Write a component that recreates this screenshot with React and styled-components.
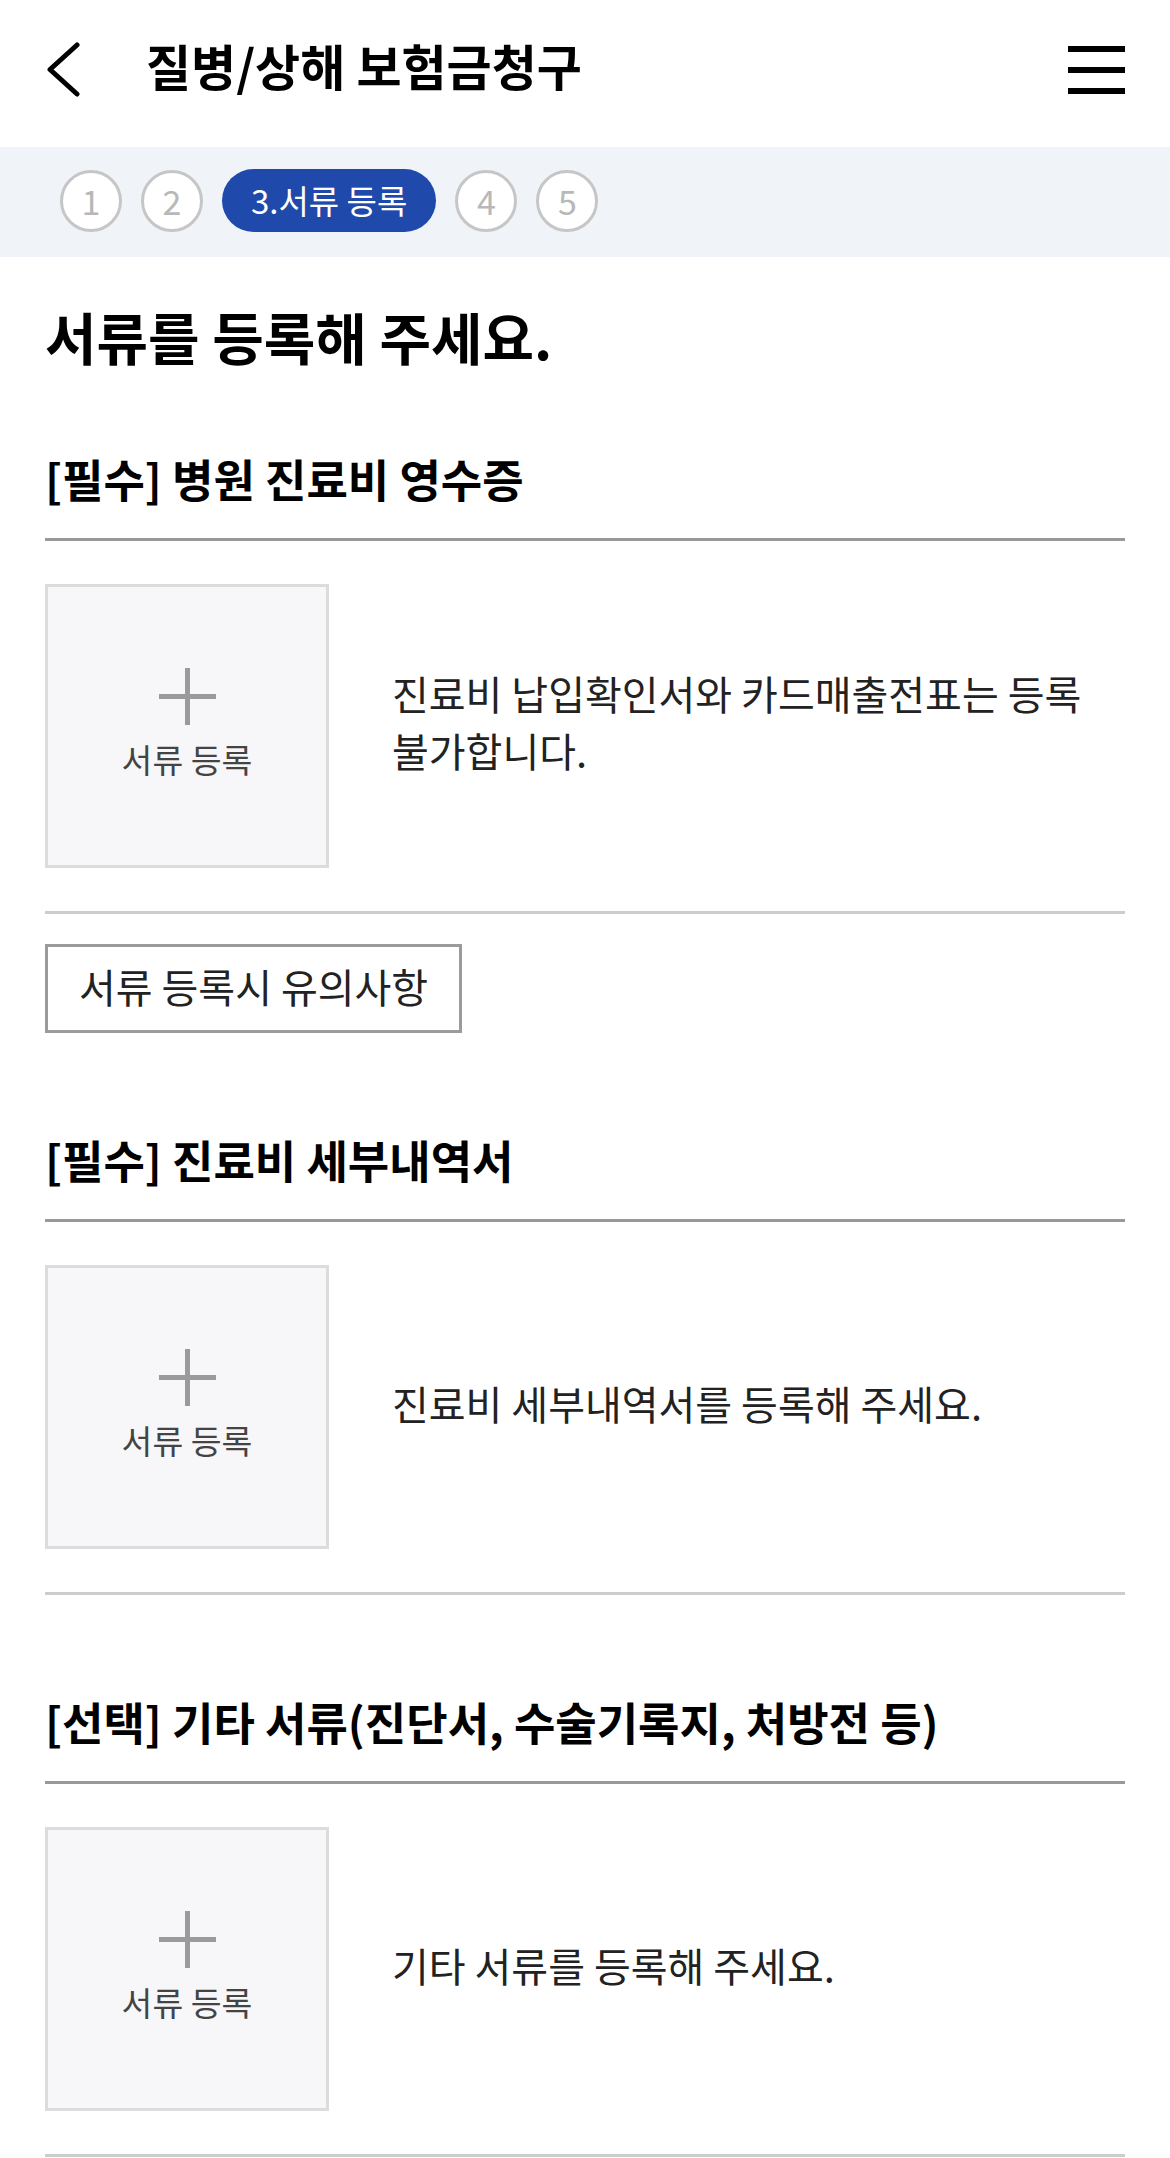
import React from "react";
import styled, { createGlobalStyle } from "styled-components";

const GlobalStyle = createGlobalStyle`
  * {
    box-sizing: border-box;
  }
  body {
    margin: 0;
    background: #fff;
    font-family: "Noto Sans CJK KR", "Noto Sans", sans-serif;
    color: #111;
  }
`;

const Page = styled.div`
  width: 1170px;
  min-height: 2158px;
  background: #fff;
`;

const Header = styled.header`
  height: 147px;
  display: flex;
  align-items: center;
  padding: 0 45px 8px;
`;

const BackButton = styled.button`
  width: 36px;
  height: 56px;
  padding: 0;
  border: 0;
  background: none;
  display: flex;
  align-items: center;
  margin-right: 65px;
`;

const Title = styled.h1`
  margin: 0;
  padding-bottom: 10px;
  font-size: 49px;
  font-weight: 700;
  line-height: 60px;
  color: #000;
`;

const MenuButton = styled.button`
  margin-left: auto;
  width: 57px;
  height: 48px;
  padding: 0;
  border: 0;
  background: none;
  display: flex;
  flex-direction: column;
  justify-content: space-between;
`;

const MenuLine = styled.span`
  display: block;
  height: 6px;
  background: #000;
`;

const StepBar = styled.nav`
  height: 110px;
  background: #f0f4f9;
  display: flex;
  align-items: center;
  gap: 19px;
  padding: 0 0 3px 60px;
`;

const StepCircle = styled.span`
  width: 62px;
  height: 62px;
  border-radius: 50%;
  border: 3px solid #c6c6c6;
  background: #fff;
  color: #b8b8b8;
  font-size: 34px;
  display: flex;
  align-items: center;
  justify-content: center;
  line-height: 1;
`;

const StepActive = styled.span`
  height: 63px;
  padding: 0 29px;
  border-radius: 32px;
  background: #1f49aa;
  color: #fff;
  font-size: 33px;
  display: flex;
  align-items: center;
  line-height: 1;
`;

const Content = styled.main`
  padding: 0 45px;
`;

const Heading = styled.h2`
  margin: 44px 0 0;
  font-size: 56px;
  font-weight: 700;
  line-height: 70px;
  color: #000;
`;

const Section = styled.section`
  margin-top: ${(p) => (p.$first ? "80px" : "99px")};
`;

const SectionTitle = styled.h3`
  margin: 0;
  font-size: 45px;
  font-weight: 700;
  line-height: 56px;
  color: #000;
  padding-bottom: 31px;
  border-bottom: 3px solid #999;
`;

const UploadRow = styled.div`
  display: flex;
  align-items: center;
  gap: 63px;
  padding: 43px 0;
  border-bottom: 3px solid #cdcdcd;
`;

const UploadBox = styled.button`
  flex: 0 0 284px;
  height: 284px;
  border: 3px solid #dcdcdc;
  background: #f7f7f9;
  display: flex;
  flex-direction: column;
  align-items: center;
  justify-content: center;
  padding: 0 0 4px;
  font-family: inherit;
`;

const UploadLabel = styled.span`
  margin-top: 12px;
  font-size: 33.5px;
  line-height: 44px;
  color: #444;
`;

const Description = styled.p`
  margin: 0;
  padding-bottom: 8px;
  font-size: 40px;
  line-height: 57px;
  color: #222;
  word-break: keep-all;
`;

const NoticeButton = styled.button`
  margin-top: 30px;
  height: 89px;
  padding: 0 31px 5px;
  border: 3px solid #9b9b9b;
  background: #fff;
  font-family: inherit;
  font-size: 40px;
  color: #222;
  display: flex;
  align-items: center;
`;

const ChevronLeft = () => (
  <svg width="36" height="56" viewBox="0 0 36 56" fill="none">
    <path
      d="M32 3 L5 27.5 L32 52"
      stroke="#000"
      strokeWidth="5"
      strokeLinecap="round"
      strokeLinejoin="round"
    />
  </svg>
);

const PlusIcon = () => (
  <svg width="57" height="57" viewBox="0 0 57 57">
    <rect x="26" y="0" width="5" height="57" fill="#9a9a9a" />
    <rect x="0" y="26" width="57" height="5" fill="#9a9a9a" />
  </svg>
);

const sections = [
  {
    title: "[필수] 병원 진료비 영수증",
    desc: "진료비 납입확인서와 카드매출전표는 등록 불가합니다.",
    notice: true,
  },
  {
    title: "[필수] 진료비 세부내역서",
    desc: "진료비 세부내역서를 등록해 주세요.",
  },
  {
    title: "[선택] 기타 서류(진단서, 수술기록지, 처방전 등)",
    desc: "기타 서류를 등록해 주세요.",
  },
];

export default function App() {
  return (
    <Page>
      <GlobalStyle />
      <Header>
        <BackButton aria-label="뒤로">
          <ChevronLeft />
        </BackButton>
        <Title>질병/상해 보험금청구</Title>
        <MenuButton aria-label="메뉴">
          <MenuLine />
          <MenuLine />
          <MenuLine />
        </MenuButton>
      </Header>

      <StepBar>
        <StepCircle>1</StepCircle>
        <StepCircle>2</StepCircle>
        <StepActive>3.서류 등록</StepActive>
        <StepCircle>4</StepCircle>
        <StepCircle>5</StepCircle>
      </StepBar>

      <Content>
        <Heading>서류를 등록해 주세요.</Heading>
        {sections.map((s, i) => (
          <Section key={s.title} $first={i === 0}>
            <SectionTitle>{s.title}</SectionTitle>
            <UploadRow>
              <UploadBox>
                <PlusIcon />
                <UploadLabel>서류 등록</UploadLabel>
              </UploadBox>
              <Description>{s.desc}</Description>
            </UploadRow>
            {s.notice && <NoticeButton>서류 등록시 유의사항</NoticeButton>}
          </Section>
        ))}
      </Content>
    </Page>
  );
}
